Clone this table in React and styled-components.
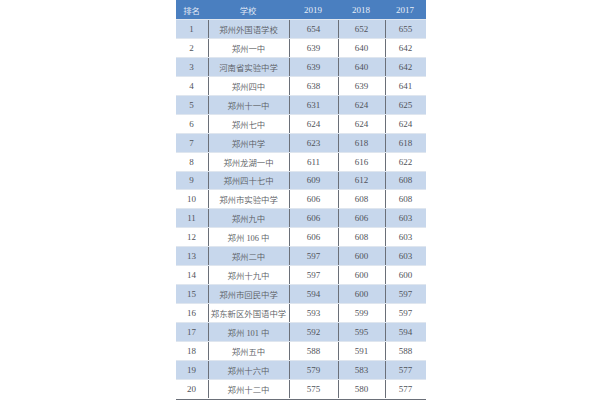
import React from "react";
import styled, { createGlobalStyle } from "styled-components";

const Global = createGlobalStyle`
  html, body { margin: 0; padding: 0; background: #fff; }
  body { font-family: "Liberation Serif", "Noto Sans CJK SC", serif; }
`;

const Page = styled.div`
  width: 600px;
  height: 400px;
  display: flex;
  justify-content: center;
  padding-left: 1px;
  box-sizing: border-box;
`;

const Table = styled.div`
  width: 250px;
  display: flex;
  flex-direction: column;
  border-bottom: 1px solid #6a6f78;
`;

const Row = styled.div`
  display: grid;
  grid-template-columns: 32px 81px 49px 47px 41px;
  height: ${(p) => (p.head ? "19px" : "18.95px")};
  background: ${(p) => (p.head ? "#4a7fc0" : p.odd ? "#c7d7ec" : "#fff")};
  color: ${(p) => (p.head ? "#e8eef8" : "#50535a")};
  border-top: ${(p) => (p.head ? "none" : "1px solid #dfe6ef")};
  box-sizing: border-box;
`;

const Cell = styled.div`
  display: flex;
  align-items: center;
  justify-content: center;
  font-size: ${(p) => (p.name ? "8.4px" : "9px")};
  font-weight: ${(p) => (p.name ? 350 : 400)};
  color: ${(p) => (p.name && !p.head ? "#5a5d64" : "inherit")};
  white-space: nowrap;
  border-left: ${(p) => (p.first || p.head ? "none" : "1px solid #6a6f78")};
`;

const data = [
  [1, "郑州外国语学校", 654, 652, 655],
  [2, "郑州一中", 639, 640, 642],
  [3, "河南省实验中学", 639, 640, 642],
  [4, "郑州四中", 638, 639, 641],
  [5, "郑州十一中", 631, 624, 625],
  [6, "郑州七中", 624, 624, 624],
  [7, "郑州中学", 623, 618, 618],
  [8, "郑州龙湖一中", 611, 616, 622],
  [9, "郑州四十七中", 609, 612, 608],
  [10, "郑州市实验中学", 606, 608, 608],
  [11, "郑州九中", 606, 606, 603],
  [12, "郑州 106 中", 606, 608, 603],
  [13, "郑州二中", 597, 600, 603],
  [14, "郑州十九中", 597, 600, 600],
  [15, "郑州市回民中学", 594, 600, 597],
  [16, "郑东新区外国语中学", 593, 599, 597],
  [17, "郑州 101 中", 592, 595, 594],
  [18, "郑州五中", 588, 591, 588],
  [19, "郑州十六中", 579, 583, 577],
  [20, "郑州十二中", 575, 580, 577],
];

export default function App() {
  return (
    <Page>
      <Global />
      <Table>
        <Row head>
          {["排名", "学校", "2019", "2018", "2017"].map((h, j) => (
            <Cell head name={j < 2} key={h}>{h}</Cell>
          ))}
        </Row>
        {data.map((r, i) => (
          <Row key={r[0]} odd={i % 2 === 0}>
            {r.map((v, j) => (
              <Cell key={j} first={j === 0} name={j === 1}>{v}</Cell>
            ))}
          </Row>
        ))}
      </Table>
    </Page>
  );
}
